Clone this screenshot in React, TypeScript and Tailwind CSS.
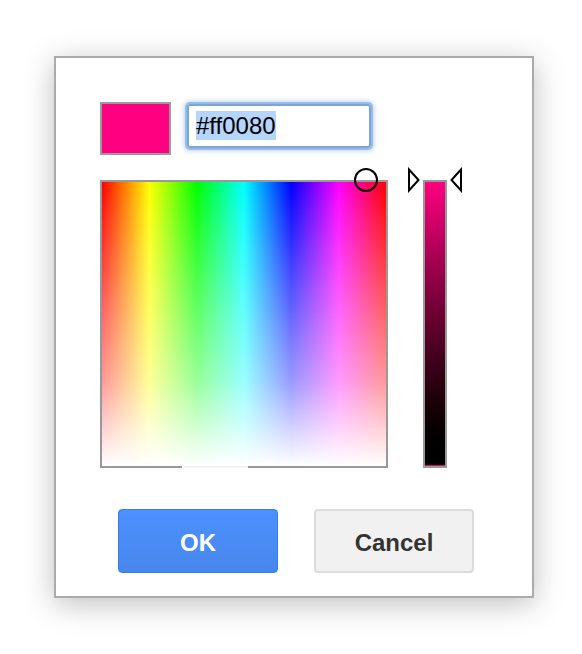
import React from "react";

const Arrow = ({ dir }: { dir: "right" | "left" }) => (
  <svg width="14" height="26" viewBox="0 0 14 26" className="block">
    {dir === "right" ? (
      <path d="M2 2.5 L11.5 13 L2 23.5 Z" fill="#fff" stroke="#000" strokeWidth="2" strokeLinejoin="miter" />
    ) : (
      <path d="M12 2.5 L2.5 13 L12 23.5 Z" fill="#fff" stroke="#000" strokeWidth="2" strokeLinejoin="miter" />
    )}
  </svg>
);

export default function App() {
  return (
    <div className="w-[582px] h-[654px] bg-white pl-[54px] pt-[56px] font-['Liberation_Sans',Arial,sans-serif]">
      <div className="w-[480px] h-[542px] bg-white border-2 border-[#ababab] shadow-[0_6px_28px_rgba(0,0,0,0.25)] pl-[44px] pt-[44px]">
        {/* swatch + hex input */}
        <div className="flex items-center gap-[16px]">
          <div className="w-[71px] h-[53px] bg-[#ff0080] border-2 border-[#9b9b9b]" />
          <div className="w-[184px] h-[44px] border-2 border-[#79a6dc] rounded-[3px] shadow-[0_0_0_2px_rgba(120,165,220,0.6),0_0_5px_3px_rgba(110,160,220,0.45)] flex items-center pl-[7px] -mt-[6px]">
            <span className="text-[24px] leading-[29px] text-black bg-[#b4d5fe]">#ff0080</span>
          </div>
        </div>

        {/* picker area */}
        <div className="flex mt-[25px]">
          <div className="relative w-[288px] h-[288px] border-2 border-[#999] bg-[linear-gradient(to_right,#f00,#ff0,#0f0,#0ff,#00f,#f0f,#f00)]">
            <div className="absolute inset-0 bg-linear-to-b from-white/0 via-white/60 via-70% to-white" />
            <div className="absolute -bottom-[2px] left-[80px] w-[66px] h-[2px] bg-[#f4f4f4]" />
            <svg width="26" height="26" viewBox="0 0 26 26" className="absolute -top-[15px] left-[251px]">
              <circle cx="13" cy="13" r="11" fill="none" stroke="#000" strokeWidth="2" />
            </svg>
          </div>

          <div className="relative ml-[35px] w-[24px] h-[288px] border-2 border-[#999] bg-linear-to-b from-[#ff0080] to-black">
            <div className="absolute -left-[18px] -top-[15px]">
              <Arrow dir="right" />
            </div>
            <div className="absolute -right-[18px] -top-[15px]">
              <Arrow dir="left" />
            </div>
            <div className="absolute bottom-0 left-0 right-0 h-[1px] bg-[#e0006f]" />
          </div>
        </div>

        {/* buttons */}
        <div className="flex gap-[36px] mt-[41px] ml-[18px]">
          <button className="w-[160px] h-[64px] pt-[4px] rounded-[4px] border border-[#3b7de8] bg-linear-to-b from-[#4d90fe] to-[#4787ed] text-white text-[24px] font-bold">
            OK
          </button>
          <button className="w-[160px] h-[64px] pt-[4px] rounded-[4px] border-2 border-[#dcdcdc] bg-[#f1f1f1] text-[#333] text-[24px] font-bold">
            Cancel
          </button>
        </div>
      </div>
    </div>
  );
}
